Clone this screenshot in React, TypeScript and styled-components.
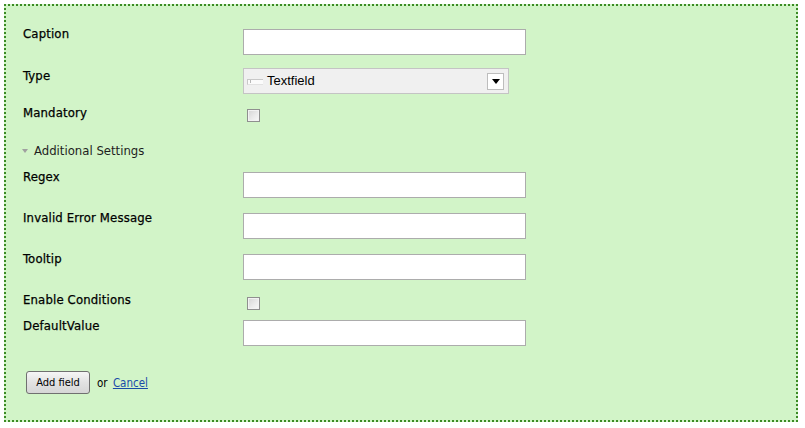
import React from "react";
import styled, { createGlobalStyle } from "styled-components";

const Global = createGlobalStyle`
  html, body { margin: 0; padding: 0; background: #ffffff; }
  * { box-sizing: border-box; }
`;

const FONT = `"DejaVu Sans Condensed", "DejaVu Sans", sans-serif`;

const Panel = styled.form`
  margin: 4px;
  width: 794px;
  height: 418px;
  border: 2px dotted #3b8b24;
  background: #d2f4c8;
  padding: 23px 0 0 17px;
  display: flex;
  flex-direction: column;
  font-family: ${FONT};
  font-stretch: semi-condensed;
`;

const Row = styled.div<{ $mt: number }>`
  display: grid;
  grid-template-columns: 220px 1fr;
  align-items: start;
  margin-top: ${(p) => p.$mt}px;
`;

const Label = styled.label<{ $shift: number }>`
  font-size: 13px;
  line-height: 16px;
  color: #000;
  letter-spacing: 0.15px;
  -webkit-text-stroke: 0.25px #000;
  margin-top: ${(p) => p.$shift}px;
  height: 16px;
  margin-bottom: -16px;
`;

const TextInput = styled.input`
  display: block;
  width: 283px;
  height: 26px;
  border: 1px solid #acacac;
  background: #fff;
  margin: 0;
  padding: 2px 4px;
  font-family: "Liberation Sans", sans-serif;
  font-size: 13px;
  outline: none;
`;

const Check = styled.input`
  appearance: none;
  -webkit-appearance: none;
  display: block;
  width: 13px;
  height: 13px;
  margin: 0 0 0 4px;
  border: 1px solid #8f8f8f;
  box-shadow: inset 0 0 0 1px #f2f2f2;
  background: linear-gradient(135deg, #d4d4d4 0%, #ececec 60%, #f8f8f8 100%);
`;

const Select = styled.div`
  width: 266px;
  height: 26px;
  border: 1px solid #c4c4c4;
  background: #f0f0f0;
  display: flex;
  align-items: center;
  padding: 0 4px 0 3px;
  font-family: "Liberation Sans", sans-serif;
  font-size: 13px;
  color: #000;
`;

const Swatch = styled.span`
  width: 16px;
  height: 6px;
  margin-right: 4px;
  margin-top: 1px;
  background: #fbfbfb;
  border-top: 1px solid #c8c8c8;
  border-left: 1px solid #c8c8c8;
  border-bottom: 1px solid #e2e2e2;
  position: relative;
  &::after {
    content: "";
    position: absolute;
    left: 2px;
    top: 0;
    width: 1px;
    height: 3px;
    background: #b8b8b8;
  }
`;

const SelectText = styled.span`
  flex: 1;
  line-height: 16px;
`;

const DropButton = styled.span`
  width: 17px;
  height: 17px;
  border: 1px solid #bdbdbd;
  background: #ffffff;
  display: flex;
  align-items: center;
  justify-content: center;
  &::before {
    content: "";
    border-top: 5px solid #000;
    border-left: 4px solid transparent;
    border-right: 4px solid transparent;
    margin-top: 1px;
  }
`;

const Toggle = styled.div`
  display: flex;
  align-items: center;
  margin: 20px 0 0 -1px;
  height: 16px;
  gap: 6px;
  font-size: 13px;
  color: #1e1e1e;
  cursor: pointer;
`;

const Arrow = styled.span`
  width: 0;
  height: 0;
  border-top: 4px solid #a0a0a0;
  border-left: 3px solid transparent;
  border-right: 3px solid transparent;
  margin-top: 1px;
`;

const Footer = styled.div`
  display: flex;
  align-items: center;
  margin: 25px 0 0 3px;
  gap: 7px;
  font-size: 11.5px;
  color: #000;
`;

const Button = styled.button`
  width: 64px;
  height: 23px;
  padding: 0;
  border: 1px solid #707070;
  border-radius: 3px;
  background: linear-gradient(#f6f6f6, #e2e2e2 50%, #d6d6d6);
  font-family: ${FONT};
  font-stretch: semi-condensed;
  font-size: 11px;
  color: #000;
`;

const Link = styled.a`
  color: #1a4ba8;
  text-decoration: underline;
  margin-left: 2px;
`;

type Field = { label: string; kind: "text" | "select" | "check"; mt: number; shift: number };

const top: Field[] = [
  { label: "Caption", kind: "text", mt: 0, shift: -3 },
  { label: "Type", kind: "select", mt: 13, shift: 0 },
  { label: "Mandatory", kind: "check", mt: 15, shift: -4 },
];

const extra: Field[] = [
  { label: "Regex", kind: "text", mt: 14, shift: -3 },
  { label: "Invalid Error Message", kind: "text", mt: 15, shift: -3 },
  { label: "Tooltip", kind: "text", mt: 15, shift: -3 },
  { label: "Enable Conditions", kind: "check", mt: 17, shift: -5 },
  { label: "DefaultValue", kind: "text", mt: 10, shift: -2 },
];

function Control({ kind }: { kind: Field["kind"] }) {
  if (kind === "text") return <TextInput type="text" />;
  if (kind === "check") return <Check type="checkbox" />;
  return (
    <Select>
      <Swatch />
      <SelectText>Textfield</SelectText>
      <DropButton />
    </Select>
  );
}

function FieldRow({ f }: { f: Field }) {
  return (
    <Row $mt={f.mt}>
      <Label $shift={f.shift}>{f.label}</Label>
      <div>
        <Control kind={f.kind} />
      </div>
    </Row>
  );
}

export default function App() {
  return (
    <>
      <Global />
      <Panel onSubmit={(e) => e.preventDefault()}>
        {top.map((f) => (
          <FieldRow key={f.label} f={f} />
        ))}
        <Toggle>
          <Arrow />
          <span>Additional Settings</span>
        </Toggle>
        {extra.map((f) => (
          <FieldRow key={f.label} f={f} />
        ))}
        <Footer>
          <Button type="submit">Add field</Button>
          <span>
            or <Link href="#">Cancel</Link>
          </span>
        </Footer>
      </Panel>
    </>
  );
}
